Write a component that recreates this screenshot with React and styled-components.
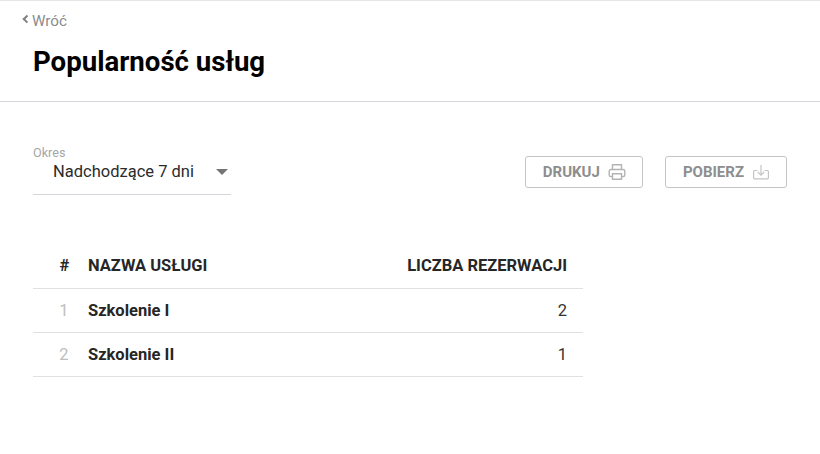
import React from 'react'
import styled, { createGlobalStyle } from 'styled-components';

const GlobalStyle = createGlobalStyle`
    html, body {
        margin: 0;
        padding: 0;
        background: #fff;
        font-family: Roboto, "Liberation Sans", sans-serif;
    }
`;

const servicios = [
    { id: 1, name: 'Szkolenie I', count: 2 },
    { id: 2, name: 'Szkolenie II', count: 1 },
];

const PrintIcon = () => (
    <svg width="18" height="18" viewBox="0 0 18 18" fill="none" stroke="#b3b3b3" strokeWidth="1.4">
        <path d="M4.5 6.5V1.7h9v4.8" />
        <path d="M4.5 13.5H2.8a1.6 1.6 0 0 1-1.6-1.6V8.2a1.7 1.7 0 0 1 1.7-1.7h12.2a1.7 1.7 0 0 1 1.7 1.7v3.7a1.6 1.6 0 0 1-1.6 1.6h-1.7" />
        <path d="M4.5 10.8h9v5.5h-9z" />
    </svg>
);

const DownloadIcon = () => (
    <svg width="18" height="18" viewBox="0 0 18 18" fill="none" stroke="#c4c4c4" strokeWidth="1.2">
        <path d="M9 2v10" />
        <path d="M5.8 9 9 12.2 12.2 9" />
        <path d="M5.5 7.5H2.6a1.2 1.2 0 0 0-1 1.2v6a1.2 1.2 0 0 0 1.2 1.2h12.4a1.2 1.2 0 0 0 1.2-1.2v-6a1.2 1.2 0 0 0-1-1.2h-2.9" />
    </svg>
);

const App = () => {
    return (
        <Page>
            <GlobalStyle />
            <Header>
                <BackLink href="#"><BackArrow />Wróć</BackLink>
                <Title>Popularność usług</Title>
            </Header>
            <Toolbar>
                <Field>
                    <FieldLabel>Okres</FieldLabel>
                    <Select>
                        <span>Nadchodzące 7 dni</span>
                        <Caret />
                    </Select>
                </Field>
                <Actions>
                    <ActionBtn>DRUKUJ <PrintIcon /></ActionBtn>
                    <ActionBtn>POBIERZ <DownloadIcon /></ActionBtn>
                </Actions>
            </Toolbar>
            <Table>
                <thead>
                    <tr>
                        <IndexHead>#</IndexHead>
                        <HeadCell>NAZWA USŁUGI</HeadCell>
                        <CountHead>LICZBA REZERWACJI</CountHead>
                    </tr>
                </thead>
                <tbody>
                    {
                        servicios.map((servicio, orden) => (
                            <tr key={servicio.id}>
                                <OrderCell>{orden + 1}</OrderCell>
                                <NameCell>{servicio.name}</NameCell>
                                <CountCell>{servicio.count}</CountCell>
                            </tr>
                        ))
                    }
                </tbody>
            </Table>
        </Page>
    )
}

const Page = styled.div`
    width: 820px;
    height: 454px;
    box-sizing: border-box;
    border-top: 1px solid #e6e6ea;
    overflow: hidden;
`;

const Header = styled.header`
    height: 101px;
    box-sizing: border-box;
    padding: 12px 33px 0;
    border-bottom: 1px solid #d6d6dc;
`;

const BackLink = styled.a`
    display: flex;
    align-items: center;
    margin-left: -11px;
    height: 16px;
    color: #8c8c8c;
    font-size: 15.2px;
    line-height: 16px;
    text-decoration: none;
`;

const BackArrow = styled.i`
    display: block;
    width: 3.5px;
    height: 3.5px;
    margin: -4px 2.5px 0 2px;
    border-left: 2px solid #808080;
    border-bottom: 2px solid #808080;
    transform: rotate(45deg);
`;

const Title = styled.h1`
    margin: 17px 0 0;
    color: #000;
    font-size: 27.6px;
    line-height: 32px;
    font-weight: 700;
`;

const Toolbar = styled.div`
    display: flex;
    justify-content: space-between;
    padding: 45px 33px 0;
`;

const Field = styled.div`
    width: 198px;
    height: 48px;
    box-sizing: border-box;
    border-bottom: 1px solid #d4d4da;
`;

const FieldLabel = styled.div`
    color: #a6a6a6;
    font-size: 12.6px;
    line-height: 12px;
`;

const Select = styled.div`
    display: flex;
    justify-content: space-between;
    align-items: center;
    padding: 0 3px 0 20px;
    margin-top: 3px;
    color: #2b2b2b;
    font-size: 16.5px;
    line-height: 20px;
`;

const Caret = styled.i`
    width: 0;
    height: 0;
    border-left: 6px solid transparent;
    border-right: 6px solid transparent;
    border-top: 6px solid #757575;
`;

const Actions = styled.div`
    display: flex;
    gap: 22px;
    padding-top: 9px;
`;

const ActionBtn = styled.button`
    display: flex;
    align-items: center;
    justify-content: center;
    gap: 8px;
    height: 32px;
    padding: 0 16px 0 17px;
    background: #fff;
    border: 1px solid #c4c4c4;
    border-radius: 3px;
    color: #8e8e8e;
    font-family: inherit;
    font-size: 15px;
    font-weight: 700;
`;

const Table = styled.table`
    width: 550px;
    margin: 49px 0 0 33px;
    border-collapse: collapse;
    table-layout: fixed;

    td, th {
        box-sizing: border-box;
        height: 44px;
        padding: 0;
        border-bottom: 1px solid #e0e0e0;
    }
`;

const HeadCell = styled.th`
    color: #262626;
    font-size: 16.5px;
    font-weight: 700;
    text-align: left;
`;

const IndexHead = styled(HeadCell)`
    width: 55px;
    text-align: center;
    && { padding-left: 8px; }
`;

const CountHead = styled(HeadCell)`
    width: 250px;
    text-align: right;
    && { padding-right: 16px; }
`;

const OrderCell = styled.td`
    color: #bdbdbd;
    font-size: 16.5px;
    text-align: center;
    && { padding-left: 7px; }
`;

const NameCell = styled.td`
    color: #262626;
    font-size: 16.5px;
    font-weight: 700;
`;

const CountCell = styled.td`
    color: #333;
    font-size: 16.5px;
    text-align: right;
    && { padding-right: 16px; }
`;

export default App
